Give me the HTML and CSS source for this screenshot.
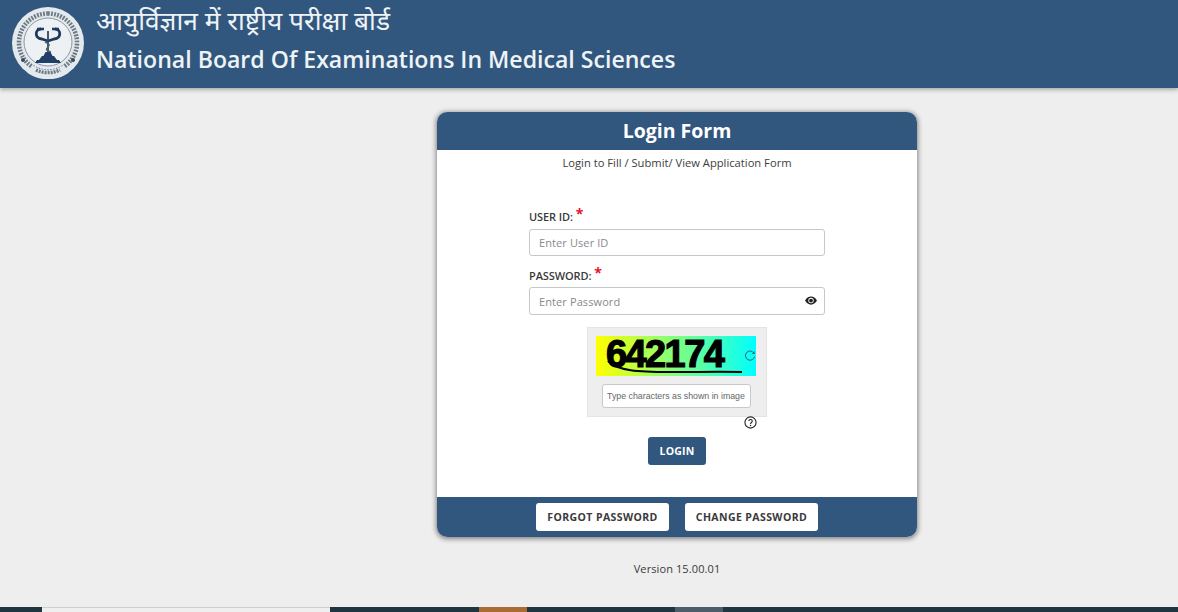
FILE: index.html
```html
<!DOCTYPE html>
<html lang="en">
<head>
<meta charset="utf-8">
<title>Login Form</title>
<link rel="stylesheet" href="styles.css">
</head>
<body>
<header class="site-header">
  <svg class="logo" viewBox="0 0 72 72" width="72" height="72" aria-hidden="true">
    <circle cx="36" cy="36" r="36" fill="#e4e9ed"/>
    <circle cx="36" cy="35" r="24" fill="#eef1f3" stroke="#8a98a3" stroke-width="1"/>
    <path d="M36 6.500a29 29 0 1 1-.01 0" fill="none" stroke="#6b7a85" stroke-width="4.500" stroke-dasharray="1.800 1.300"/>
    <path d="M18 62a31 31 0 0 0 36 0" fill="none" stroke="#e4e9ed" stroke-width="9"/>
    <path d="M24 63a29 29 0 0 0 24 0" fill="none" stroke="#6a7a88" stroke-width="3.500" stroke-dasharray="2 1"/>
    <circle cx="11" cy="53" r="2" fill="#3a4a58"/>
    <circle cx="61" cy="53" r="2" fill="#3a4a58"/>
    <path d="M29 22c-6 0-7 9 1 10l6 2M43 22c6 0 7 9-1 10l-6 2" fill="none" stroke="#1d3a5f" stroke-width="2.800"/>
    <path d="M25 22h7M40 22h7" stroke="#1d3a5f" stroke-width="2.400"/>
    <path d="M36 24v22" stroke="#33475c" stroke-width="1.800"/>
    <path d="M33 35c5 2 5 3 3 5s-3 3 3 5" fill="none" stroke="#50606e" stroke-width="1.400"/>
    <path d="M33.500 45h5l2 4h-9zM30 49h12l3 4H27zM25 53h22l2 3H23z" fill="#1f3f68"/>
  </svg>
  <div class="brand">
    <div class="brand-hi">आयुर्विज्ञान में राष्ट्रीय परीक्षा बोर्ड</div>
    <div class="brand-en">National Board Of Examinations In Medical Sciences</div>
  </div>
</header>

<main class="page">
  <section class="card">
    <h1 class="card-title">Login Form</h1>
    <div class="card-body">
      <p class="subtitle">Login to Fill / Submit/ View Application Form</p>
      <form class="form">
        <label class="label label-user">USER ID: <span class="req">*</span></label>
        <input class="input" type="text" placeholder="Enter User ID">
        <label class="label label-pass">PASSWORD: <span class="req">*</span></label>
        <div class="pass-wrap">
          <input class="input input-pass" type="password" placeholder="Enter Password">
          <svg class="eye" viewBox="0 0 16 12" width="12" height="9" aria-hidden="true">
            <path d="M0 6c2-3.600 4.800-5.500 8-5.500S14 2.400 16 6c-2 3.600-4.800 5.500-8 5.500S2 9.600 0 6z" fill="#222"/>
            <circle cx="8" cy="6" r="3.600" fill="#fff"/>
            <circle cx="8" cy="6" r="2.500" fill="#222"/>
          </svg>
        </div>
        <div class="captcha-area">
          <div class="captcha">
            <div class="captcha-img">
              <span class="captcha-code">642174</span>
              <svg class="captcha-line" viewBox="0 0 160 40" width="160" height="40" aria-hidden="true">
                <path d="M12 25c10 10 30 11 62 11 28 0 50-.5 72 0" fill="none" stroke="#000" stroke-width="2"/>
              </svg>
              <svg class="refresh" viewBox="0 0 12 12" width="12" height="12" aria-hidden="true">
                <path d="M10 3.200A4.600 4.600 0 1 0 10.600 6.500" fill="none" stroke="#2f5d6e" stroke-width="1"/>
                <path d="M10.600 1v3H7.800z" fill="#2f5d6e"/>
              </svg>
            </div>
            <input class="captcha-input" type="text" placeholder="Type characters as shown in image">
          </div>
          <svg class="help" viewBox="0 0 14 14" width="13" height="13" aria-hidden="true">
            <circle cx="7" cy="7" r="6" fill="none" stroke="#222" stroke-width="1.200"/>
            <path d="M5.200 5.500c0-2.300 3.700-2.300 3.700 0 0 1.500-1.900 1.400-1.900 3" fill="none" stroke="#222" stroke-width="1.200"/>
            <circle cx="7" cy="10.300" r=".8" fill="#222"/>
          </svg>
        </div>
        <button class="btn-login" type="button">LOGIN</button>
      </form>
    </div>
    <div class="card-footer">
      <button class="btn-light" type="button">FORGOT PASSWORD</button>
      <button class="btn-light" type="button">CHANGE PASSWORD</button>
    </div>
  </section>
  <p class="version">Version 15.00.01</p>
</main>

<footer class="strip">
  <span class="seg seg-dark-a"></span>
  <span class="seg seg-light"></span>
  <span class="seg seg-dark-b"></span>
  <span class="seg seg-orange"></span>
  <span class="seg seg-dark-c"></span>
  <span class="seg seg-gray"></span>
  <span class="seg seg-dark-d"></span>
</footer>
</body>
</html>
```
FILE: styles.css
```css
* { box-sizing: border-box; }
html, body { margin: 0; padding: 0; }
body {
  width: 1178px;
  height: 612px;
  overflow: hidden;
  display: flex;
  flex-direction: column;
  background: #eeeeee;
  font-family: "Open Sans", "Noto Sans", sans-serif;
  color: #333;
}
.site-header {
  flex: none;
  height: 88px;
  display: flex;
  align-items: flex-start;
  background: #32577f;
  box-shadow: 0 2px 4px rgba(0, 0, 0, .28);
  padding: 7px 0 0 12px;
  position: relative;
}
.logo { flex: none; }
.brand { margin-left: 13px; color: #eef3f6; margin-top: -7px; }
.brand-hi { height: 45px; font-size: 26.300px; line-height: 41px; font-family: "Noto Sans", "Open Sans", sans-serif; margin-left: -1px; }
.brand-en { font-size: 23.100px; font-weight: 600; line-height: 29px; white-space: nowrap; margin-left: -1px; }

.page { flex: 1; display: flex; flex-direction: column; align-items: center; padding: 24px 0 0 176px; }
.card {
  width: 480px;
  height: 425px;
  display: flex;
  flex-direction: column;
  border-radius: 10px;
  box-shadow: 0 1px 5px 1px rgba(0, 0, 0, .45);
  background: #fff;
  overflow: hidden;
}
.card-title {
  flex: none;
  height: 38px;
  margin: 0;
  background: #32577f;
  color: #fff;
  text-align: center;
  font-size: 19.500px;
  font-weight: 700;
  line-height: 38px;
}
.card-body { flex: 1; }
.subtitle { margin: 5px 0 0; text-align: center; font-size: 11.200px; line-height: 15px; color: #3d3d3d; }
.form { width: 296px; margin: 38px auto 0; display: flex; flex-direction: column; }
.label { display: block; height: 20px; font-size: 11px; font-weight: 600; line-height: 20px; color: #3a3a3a; letter-spacing: -.1px; }
.label-user { margin: -1px 0 2px; }
.label-pass { margin: 10px 0 1px; }
.req { color: #e8112d; font-size: 14px; font-weight: 700; line-height: 10px; position: relative; top: -2px; }
.input {
  display: block;
  width: 296px;
  height: 27px;
  padding: 0 9px;
  border: 1px solid #c4c8cc;
  border-radius: 3px;
  background: #fff;
  font-family: inherit;
  font-size: 11px;
  outline: none;
}
.input-pass { height: 28px; }
.input::placeholder { color: #8a8a8a; opacity: 1; letter-spacing: .1px; }
.pass-wrap { position: relative; }
.eye { position: absolute; right: 8px; top: 9px; }
.captcha-area { width: 180px; margin: 12px auto 0; position: relative; height: 110px; }
.captcha { width: 180px; height: 90px; background: #eeeeee; padding: 9px 9px 0; border: 1px solid #e4e4e4; }
.captcha-img {
  width: 160px;
  height: 40px;
  position: relative;
  background: linear-gradient(90deg, #ffff00, #00ffff);
  margin-top: -1px;
  margin-left: -1px;
}
.captcha-code {
  position: absolute;
  left: 10px;
  top: -2px;
  font-family: "Liberation Sans", sans-serif;
  font-size: 38px;
  line-height: 40px;
  font-weight: 700;
  color: #000;
  letter-spacing: -1.600px;
  -webkit-text-stroke: 1.200px #000;
}
.captcha-line { position: absolute; left: 0; top: 0; }
.refresh { position: absolute; right: 0; top: 14px; }
.captcha-input {
  display: block;
  width: 149px;
  height: 24px;
  margin: 8px 0 0 5px;
  padding: 0 4px;
  border: 1px solid #c9c9c9;
  border-radius: 3px;
  background: #fff;
  font-family: "Liberation Sans", sans-serif;
  font-size: 8.800px;
  outline: none;
}
.captcha-input::placeholder { color: #666; opacity: 1; }
.help { position: absolute; right: 10px; top: 89px; }
.btn-login {
  align-self: center;
  width: 58px;
  height: 28px;
  border: 0;
  border-radius: 3px;
  background: #32577f;
  color: #fff;
  font-family: inherit;
  font-size: 10.500px;
  font-weight: 700;
  letter-spacing: .2px;
  padding: 0;
}
.card-footer {
  flex: none;
  height: 40px;
  background: #32577f;
  display: flex;
  justify-content: center;
  gap: 16px;
  padding-top: 6px;
}
.btn-light {
  width: 133px;
  height: 28px;
  padding: 0;
  border: 0;
  border-radius: 3px;
  background: #fff;
  color: #3a3a3a;
  font-family: inherit;
  font-size: 10.500px;
  font-weight: 700;
  letter-spacing: .4px;
}
.version { margin: 24px 0 0; font-size: 11px; line-height: 15px; color: #3a3a3a; letter-spacing: .1px; }

.strip { flex: none; height: 5px; display: flex; background: #1f3540; }
.seg { display: block; height: 5px; }
.seg-dark-a { width: 42px; }
.seg-light { width: 288px; background: #efefef; border-top: 1px solid #cfcfcf; }
.seg-dark-b { width: 149px; }
.seg-orange { width: 48px; background: #a96c32; }
.seg-dark-c { width: 148px; }
.seg-gray { width: 48px; background: #4d5d69; }
.seg-dark-d { flex: 1; }
```
